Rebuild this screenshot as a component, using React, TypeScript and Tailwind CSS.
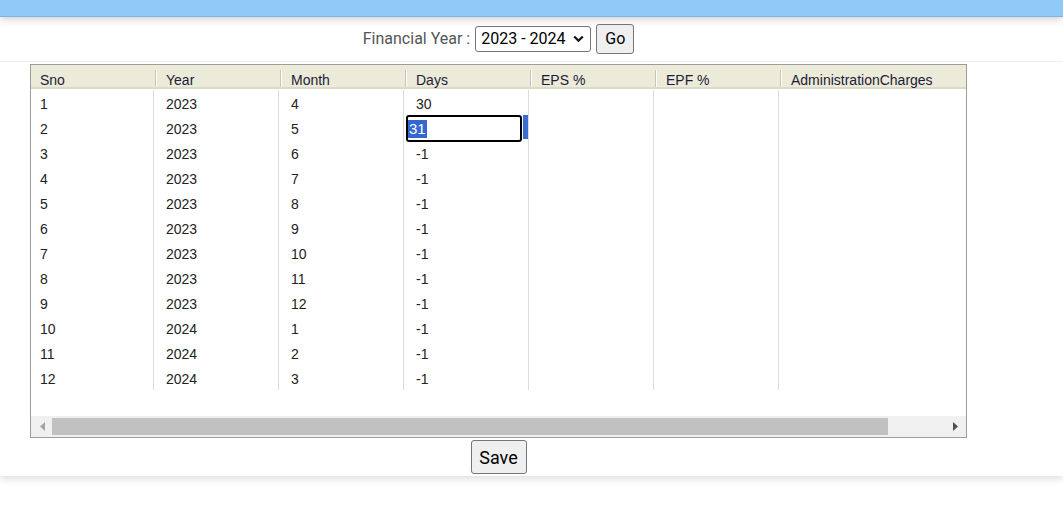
import React from 'react';

type Row = { sno: number; year: number; month: number; days: number };

const rows: Row[] = [
  { sno: 1, year: 2023, month: 4, days: 30 },
  { sno: 2, year: 2023, month: 5, days: 31 },
  { sno: 3, year: 2023, month: 6, days: -1 },
  { sno: 4, year: 2023, month: 7, days: -1 },
  { sno: 5, year: 2023, month: 8, days: -1 },
  { sno: 6, year: 2023, month: 9, days: -1 },
  { sno: 7, year: 2023, month: 10, days: -1 },
  { sno: 8, year: 2023, month: 11, days: -1 },
  { sno: 9, year: 2023, month: 12, days: -1 },
  { sno: 10, year: 2024, month: 1, days: -1 },
  { sno: 11, year: 2024, month: 2, days: -1 },
  { sno: 12, year: 2024, month: 3, days: -1 },
];

const headers = ['Sno', 'Year', 'Month', 'Days', 'EPS %', 'EPF %', 'AdministrationCharges'];

const HeaderCell: React.FC<{ label: string; first?: boolean; last?: boolean }> = ({ label, first, last }) => (
  <div className={`flex items-center shrink-0 h-full ${first ? 'w-[124px]' : last ? 'w-[260px]' : 'w-[125px]'}`}>
    {!first && <div className="w-[2px] h-[17px] mt-[4px] border-l border-[#c8c5b4] bg-white shrink-0" />}
    <span className="pl-[9px] mt-[9px] whitespace-nowrap">{label}</span>
  </div>
);

const BodyCell: React.FC<{ first?: boolean; last?: boolean; children?: React.ReactNode }> = ({ first, last, children }) => (
  <div
    className={`flex items-center shrink-0 h-[25px] pt-[3px] border-r border-[#dcdcdc] ${
      first ? 'w-[123px] pl-[9px]' : last ? 'w-[260px] pl-[12px]' : 'w-[125px] pl-[12px]'
    }`}
  >
    {children}
  </div>
);

export default function App() {
  return (
    <div className="min-h-screen bg-white font-['Liberation_Sans',Arial,sans-serif] text-[14px] text-[#222]">
      <div className="relative z-10 h-[17px] bg-[#90caf9] border-b border-[#7db3e2] shadow-[0_2px_8px_rgba(0,0,0,0.2)]" />

      <div className="bg-white shadow-[0_3px_7px_rgba(0,0,0,0.13)] pb-[2px]">
        <div className="h-[45px] border-b border-[#efefef]">
          <div className="ml-[30px] w-[937px] h-full flex items-center justify-center font-['Roboto',sans-serif]">
            <span className="text-[16px] text-[#555] mr-[5px]">Financial Year :</span>
            <div className="relative w-[116px] h-[26px] border border-[#767676] rounded-[3px] bg-white flex items-center pl-[5px] text-[16px] text-black">
              2023 - 2024
              <svg className="absolute right-[6px] top-[8px]" width="11" height="8" viewBox="0 0 11 8">
                <path d="M1.2 1.5 L5.5 5.8 L9.8 1.5" fill="none" stroke="#111" strokeWidth="2.2" />
              </svg>
            </div>
            <button className="ml-[5px] w-[38px] h-[30px] border border-[#767676] rounded-[3px] bg-[#efefef] text-[16px] text-black">
              Go
            </button>
          </div>
        </div>

        <div className="ml-[30px] mt-[2px] w-[937px] h-[374px] border border-[#9c9c9c] flex flex-col overflow-hidden">
          <div className="h-[24px] bg-[#ecead9] border-b-2 border-[#dcd9c8] flex shrink-0 text-[#1c1c38]">
            {headers.map((h, i) => (
              <HeaderCell key={h} label={h} first={i === 0} last={i === headers.length - 1} />
            ))}
          </div>

          <div className="flex flex-col pt-[1px]">
            {rows.map((r) => (
              <div key={r.sno} className="flex">
                <BodyCell first>{r.sno}</BodyCell>
                <BodyCell>{r.year}</BodyCell>
                <BodyCell>{r.month}</BodyCell>
                {r.sno === 2 ? (
                  <div className="flex items-start shrink-0 w-[125px] h-[25px] border-r border-[#dcdcdc] pl-[2px]">
                    <div className="w-[116px] h-[27px] border-2 border-black rounded-[3px] bg-white flex items-center shrink-0 pl-0">
                      <span className="bg-[#3268d0] text-white text-[15px] leading-[18px] px-[1px]">31</span>
                    </div>
                    <div className="ml-auto w-[5px] h-[24px] bg-[#3a6dce]" />
                  </div>
                ) : (
                  <BodyCell>{r.days}</BodyCell>
                )}
                <BodyCell />
                <BodyCell />
                <BodyCell last />
              </div>
            ))}
          </div>

          <div className="flex-1" />

          <div className="h-[21px] bg-[#f0f0f0] flex items-center shrink-0">
            <div className="w-[21px] flex justify-center">
              <svg width="6" height="9" viewBox="0 0 6 9">
                <path d="M6 0 L1 4.5 L6 9 Z" fill="#a3a3a3" />
              </svg>
            </div>
            <div className="w-[836px] h-[17px] bg-[#c1c1c1]" />
            <div className="flex-1" />
            <div className="w-[21px] flex justify-center">
              <svg width="6" height="9" viewBox="0 0 6 9">
                <path d="M0 0 L5 4.5 L0 9 Z" fill="#505050" />
              </svg>
            </div>
          </div>
        </div>

        <div className="ml-[30px] w-[937px] flex justify-center mt-[2px]">
          <button className="w-[56px] h-[34px] border border-[#767676] rounded-[3px] bg-[#efefef] font-['Roboto',sans-serif] text-[18px] text-black">
            Save
          </button>
        </div>
      </div>
    </div>
  );
}
